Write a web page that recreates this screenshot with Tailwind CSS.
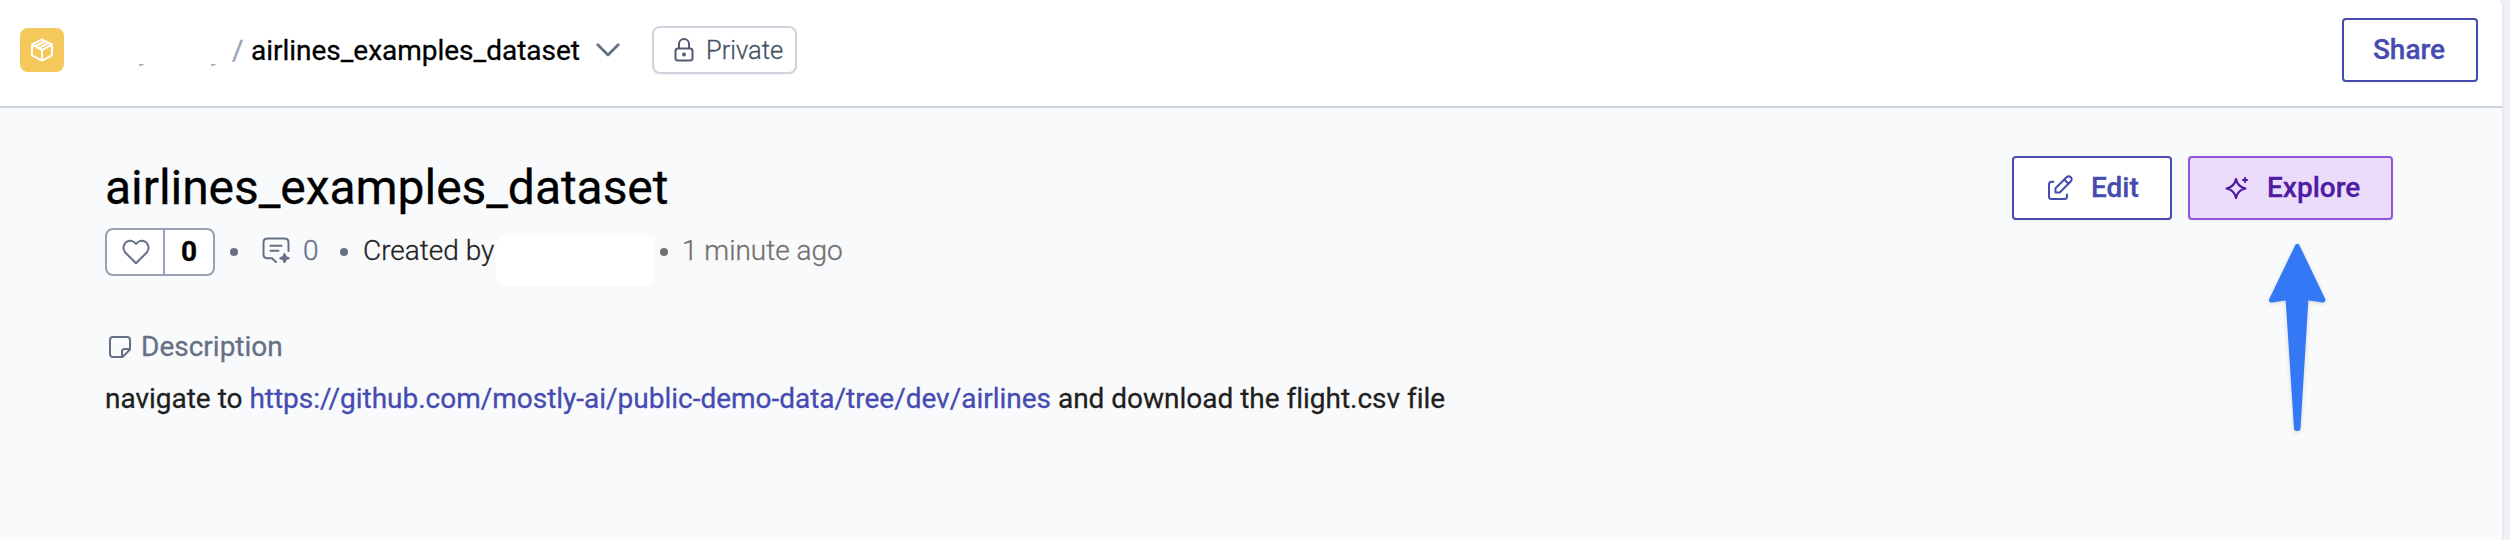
<!DOCTYPE html>
<html lang="en">
<head>
<meta charset="utf-8">
<title>airlines_examples_dataset</title>
<script src="https://cdn.jsdelivr.net/npm/@tailwindcss/browser@4"></script>
</head>
<body class="w-[2510px] h-[540px] overflow-hidden bg-[#f1f2f8] font-[Roboto,sans-serif] text-[28px] leading-[40px] whitespace-nowrap [-webkit-text-stroke:0.3px]">
<div class="relative w-[2504px] h-[540px] border-r-2 border-[#e8e9f0] bg-[#f9fafc] rounded-tr-[6px]">
  <header class="flex items-center h-[108px] pb-[6px] pl-5 pr-6 bg-white border-b-2 border-[#ced2dc] rounded-tr-[6px]">
    <div class="flex items-center justify-center size-11 rounded-lg bg-[#f5c85b]">
      <svg class="size-6" viewBox="0 0 24 24" fill="none" stroke="#fff" stroke-width="2" stroke-linejoin="round" stroke-linecap="round"><path d="M12 1.4 22 6.700V17.300L12 22.600 2 17.300V6.700ZM2 6.700 12 12 22 6.700M12 12V22.600M5.300 8.400 15.300 3.200M8.700 10.200 18.700 4.900"/></svg>
    </div>
    <div class="flex items-end h-[32px] ml-[75px] gap-[67px]">
      <svg class="w-[5px] h-[2px]" viewBox="0 0 5 2"><path d="M0 .3H5Q4 1.800 0 1.800Z" fill="#8f98ad"/></svg>
      <svg class="w-[5px] h-[2px]" viewBox="0 0 5 2"><path d="M0 .3H5Q4 1.800 0 1.800Z" fill="#8f98ad"/></svg>
    </div>
    <span class="ml-[16px] w-[19px] pt-[2px] text-[#98a1b5]">/</span>
    <h2 class="w-[330px] pt-[2px] text-black tracking-[-0.02px]">airlines_examples_dataset</h2>
    <svg class="ml-[15px] w-[24px] h-[14px]" viewBox="0 0 24 14" fill="none" stroke="#667085" stroke-width="2.800" stroke-linecap="round" stroke-linejoin="round"><path d="M1.800 1.800 12 12 22.200 1.800"/></svg>
    <div class="flex items-center ml-[32px] w-[145px] h-12 pl-[20px] border-2 border-[#ced3dc] rounded-lg bg-white shadow-xs text-[25.500px] font-light text-[#475066]">
      <svg class="w-[20px] h-[24px] mr-[12px]" viewBox="0 0 20 24" fill="none" stroke="#535c72" stroke-width="2"><rect x="1.500" y="10.500" width="17" height="12" rx="2.500"/><path d="M5 10.500V6a5 5 0 0 1 10 0V10.500"/><circle cx="10" cy="16.500" r="2" fill="#535c72" stroke="none"/></svg>
      <span>Private</span>
    </div>
    <button class="ml-auto w-[136px] h-16 pr-[2px] border-2 border-[#454bb0] rounded-[4px] bg-white font-medium text-[#454bb0] shadow-xs">Share</button>
  </header>

  <main class="pl-[105px] pr-[109px] pt-[48px]">
    <div class="flex items-center h-16">
      <h1 class="text-[48px] leading-[56px] text-black tracking-[-0.05px]">airlines_examples_dataset</h1>
      <div class="ml-auto flex gap-4">
        <button class="flex items-center w-[160px] h-16 pl-[33px] border-2 border-[#454bb0] rounded-[4px] bg-white font-medium text-[#454bb0] shadow-xs">
          <svg class="size-[26px] mr-[18px]" viewBox="0 0 26 26" fill="none" stroke="#454bb0" stroke-width="2" stroke-linecap="round" stroke-linejoin="round"><path d="M6.500 6.800H4.500Q2 6.800 2 9.300V21.500Q2 24 4.500 24H17.500Q20 24 20 21.500V19.500"/><path d="M8.500 17.500V13.300L19.500 2.300Q21.500.5 24 2.300Q25.500 4.600 23.700 6.500L12.700 17.500ZM17.300 4.500 21.500 8.700"/></svg>
          <span>Edit</span>
        </button>
        <button class="flex items-center w-[205px] h-16 pl-[35px] border-2 border-[#8e56d8] rounded-[4px] bg-[#ebdcfc] font-medium text-[#4e1ba3] shadow-xs">
          <svg class="w-[24px] h-[26px] mr-[18px]" viewBox="0 0 24 26" fill="none" stroke="#4e1ba3" stroke-width="2.200" stroke-linejoin="round" stroke-linecap="round"><path d="M11 4Q12.500 11.800 20.500 13.500Q12.500 15.200 11 23Q9.500 15.200 1.500 13.500Q9.500 11.800 11 4Z"/><path d="M20 3V7M18 5H22" stroke-width="2.200"/></svg>
          <span>Explore</span>
        </button>
      </div>
    </div>

    <div class="flex items-center mt-2 h-12 font-light">
      <div class="flex w-[110px] h-12 border-2 border-[#98a1b5] rounded-lg bg-white overflow-hidden">
        <div class="flex items-center justify-center w-[58px] border-r-2 border-[#98a1b5]">
          <svg class="w-[28px] h-[26px] ml-[2px]" viewBox="0 0 28 26" fill="none" stroke="#667085" stroke-width="2" stroke-linejoin="round"><path d="M14 24.300 3.200 13.500Q.2 9.500 2.300 5.500Q4.800 1.500 9 1.800Q12 2.200 14 5Q16 2.200 19 1.800Q23.200 1.500 25.700 5.500Q27.800 9.500 24.800 13.500Z"/></svg>
        </div>
        <div class="flex-1 text-center leading-[44px] font-bold text-black">0</div>
      </div>
      <i class="ml-[15px] size-2 rounded-full bg-[#667085]"></i>
      <svg class="ml-[24px] w-[28px] h-[26px] mb-[4px]" viewBox="0 0 28 26" fill="none" stroke="#667085" stroke-width="2" stroke-linecap="round" stroke-linejoin="round"><path d="M26.500 14V5.500Q26.500 1.500 22.500 1.500H5.500Q1.500 1.500 1.500 5.500V17.500Q1.500 21.300 5.500 21.300H10L14 25M8.500 8.800H19.500M8.500 13.800H16.500"/><path d="M22.500 17 23.700 20 26.700 21.200 23.700 22.400 22.500 25.400 21.300 22.400 18.300 21.200 21.300 20Z" fill="#667085"/></svg>
      <span class="ml-[13px] w-[17px] mb-[3px] text-[#667085]">0</span>
      <i class="ml-[20px] size-2 rounded-full bg-[#667085]"></i>
      <span class="ml-[15px] w-[133px] mb-[3px] text-[#1f1f1f]">Created by</span>
      <div class="w-[159px] h-[50px] mt-[18px] rounded-[10px] bg-white"></div>
      <i class="ml-[5px] size-2 rounded-full bg-[#707070]"></i>
      <span class="ml-[14px] mb-[3px] text-[#707070]">1 minute ago</span>
    </div>

    <div class="flex items-center mt-[51px] h-[40px] text-[#667085]">
      <svg class="ml-[4px] size-[22px] mr-[10px]" viewBox="0 0 22 22" fill="none" stroke="#667085" stroke-width="2" stroke-linejoin="round"><path d="M13.500 21H4Q1 21 1 18V4Q1 1 4 1H18Q21 1 21 4V13.500ZM13 21V15.500Q13 13 15.500 13H21"/></svg>
      <span>Description</span>
    </div>
    <p class="mt-[12px] text-[#1f1f1f] tracking-[-0.015px] [font-variant-ligatures:common-ligatures]">navigate to <a class="text-[#454bb0]">https://github.com/mostly-ai/public-demo-data/tree/dev/airlines</a> and download the flight.csv file</p>
  </main>

  <svg class="absolute left-[2260px] top-[236px] drop-shadow-sm" width="76" height="204" viewBox="0 0 76 204"><path d="M37.300 10.500 11.500 64 28 61.500 36.500 192.500H38L46 61.500 63 64Z" fill="#3478f6" stroke="#3478f6" stroke-width="5" stroke-linejoin="round"/></svg>
</div>
</body>
</html>
